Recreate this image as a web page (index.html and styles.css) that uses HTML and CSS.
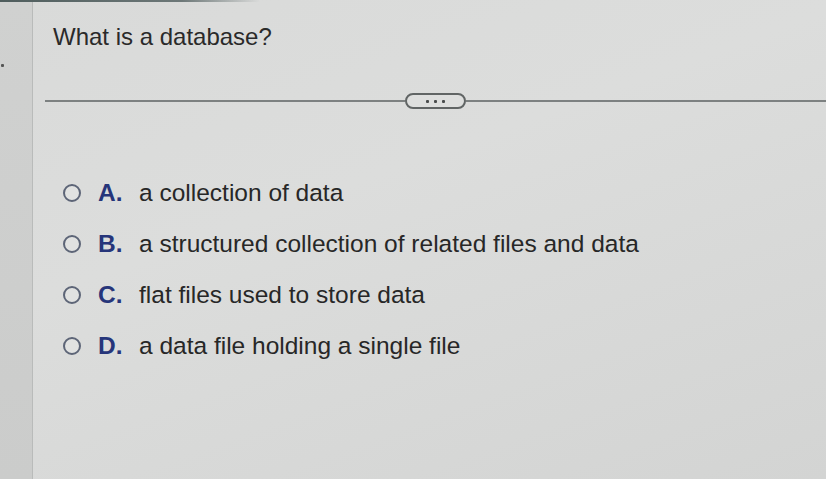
FILE: index.html
```html
<!DOCTYPE html>
<html>
<head>
<meta charset="utf-8">
<link rel="stylesheet" href="styles.css">
</head>
<body>
<div class="screen">
  <div class="side"><span class="speck"></span></div>
  <div class="main">
    <div class="topedge"></div>
    <h1 class="question">What is a database?</h1>
    <div class="divider">
      <div class="rule"></div>
      <button class="more" type="button"><span></span><span></span><span></span></button>
      <div class="rule"></div>
    </div>
    <ul class="options">
      <li class="option"><span class="radio"></span><span class="letter">A.</span><span class="text">a collection of data</span></li>
      <li class="option"><span class="radio"></span><span class="letter">B.</span><span class="text">a structured collection of related files and data</span></li>
      <li class="option"><span class="radio"></span><span class="letter">C.</span><span class="text">flat files used to store data</span></li>
      <li class="option"><span class="radio"></span><span class="letter">D.</span><span class="text">a data file holding a single file</span></li>
    </ul>
  </div>
</div>
</body>
</html>
```

FILE: styles.css
```css
html, body {
  margin: 0;
  padding: 0;
  width: 826px;
  height: 479px;
  overflow: hidden;
}
body {
  font-family: "Liberation Sans", Arial, sans-serif;
  color: #262626;
}
.screen {
  display: flex;
  width: 826px;
  height: 479px;
  background: linear-gradient(160deg, #d9dad9 0%, #dcdddc 40%, #d3d4d3 100%);
}
.side {
  position: relative;
  width: 32px;
  flex: none;
  background: linear-gradient(180deg, #d0d1d0 0%, #cbcccb 100%);
  border-right: 1px solid #b9bbba;
}
.speck {
  position: absolute;
  left: 1px;
  top: 64px;
  width: 3px;
  height: 3px;
  background: #555;
  border-radius: 1px;
}
.main {
  position: relative;
  flex: 1;
  display: flex;
  flex-direction: column;
}
.topedge {
  position: absolute;
  left: -33px;
  top: 0;
  width: 260px;
  height: 2px;
  background: linear-gradient(90deg, #4f5d5d, #6d7878 70%, rgba(110,120,120,0));
}
.question {
  margin: 23px 0 0 20px;
  font-size: 24px;
  line-height: 28px;
  font-weight: normal;
  color: #2a2a2a;
}
.divider {
  display: flex;
  align-items: center;
  margin: 42px 0 0 12px;
  height: 16px;
}
.rule {
  flex: 1;
  height: 2px;
  background: #7d8181;
}
.more {
  display: flex;
  align-items: center;
  justify-content: center;
  gap: 5px;
  width: 61px;
  height: 16px;
  padding: 0;
  border: 2px solid #616565;
  border-radius: 8px;
  background: #dedfde;
}
.more span {
  width: 3px;
  height: 3px;
  background: #4a4d4d;
  border-radius: 1px;
}
.options {
  list-style: none;
  margin: 70px 0 0 30px;
  padding: 0;
  display: flex;
  flex-direction: column;
  gap: 23px;
}
.option {
  display: flex;
  align-items: center;
  height: 28px;
  font-size: 24.5px;
}
.radio {
  width: 14px;
  height: 14px;
  border: 2px solid #5d6577;
  border-radius: 50%;
  background: #e1e2e1;
  flex: none;
}
.letter {
  margin-left: 17px;
  width: 41px;
  font-weight: bold;
  color: #26357a;
}
.text {
  color: #272727;
}
```
